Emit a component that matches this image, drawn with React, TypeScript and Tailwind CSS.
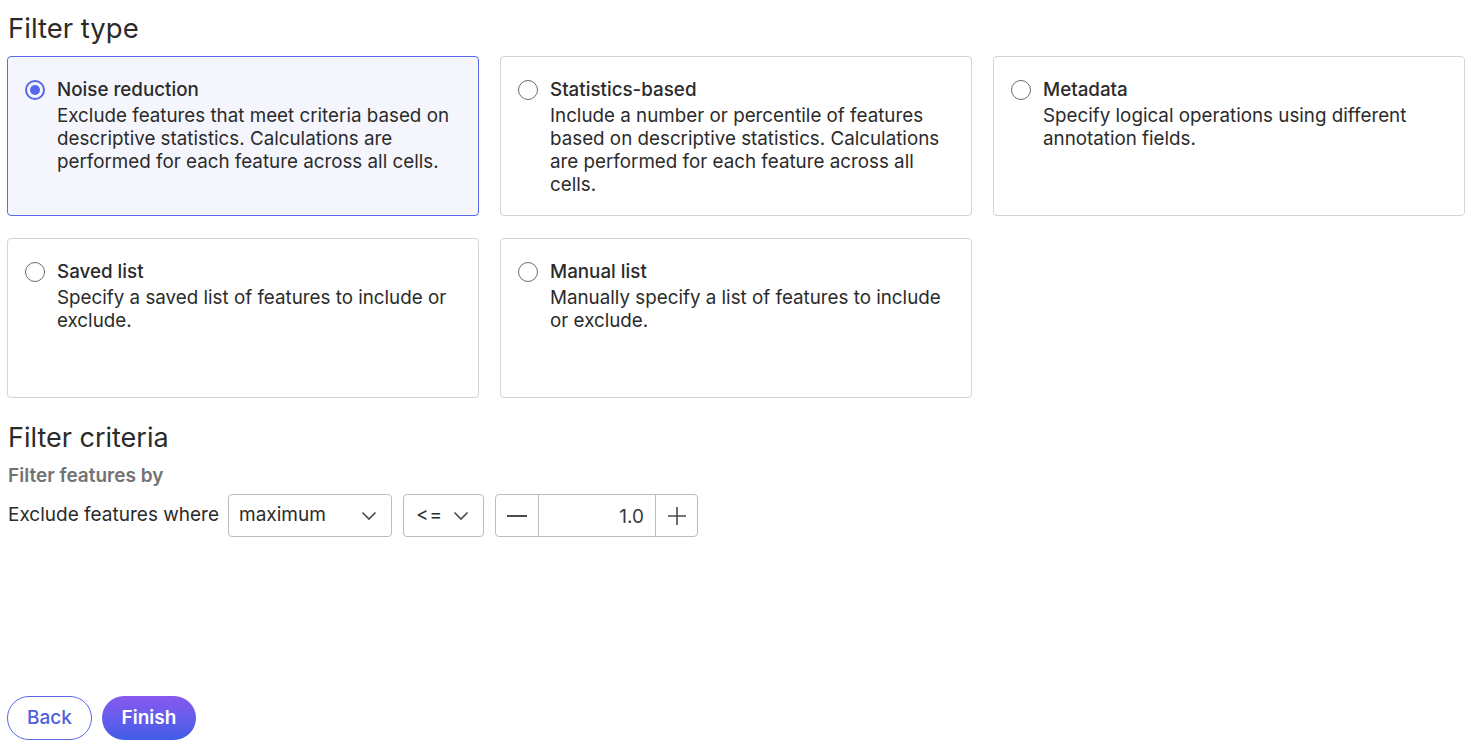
import { useState } from "react";

/* ------------------------------------------------------------------ */
/*  Data                                                               */
/* ------------------------------------------------------------------ */
interface FilterOption {
  id: string;
  title: string;
  description: string;
}

const OPTIONS: FilterOption[] = [
  {
    id: "noise",
    title: "Noise reduction",
    description:
      "Exclude features that meet criteria based on descriptive statistics. Calculations are performed for each feature across all cells.",
  },
  {
    id: "stats",
    title: "Statistics-based",
    description:
      "Include a number or percentile of features based on descriptive statistics. Calculations are performed for each feature across all cells.",
  },
  {
    id: "metadata",
    title: "Metadata",
    description: "Specify logical operations using different annotation fields.",
  },
  {
    id: "saved",
    title: "Saved list",
    description: "Specify a saved list of features to include or exclude.",
  },
  {
    id: "manual",
    title: "Manual list",
    description: "Manually specify a list of features to include or exclude.",
  },
];

const Chevron = () => (
  <svg width="20" height="20" viewBox="0 0 20 20" fill="none" stroke="#4a4a4a" strokeWidth="1.6">
    <path d="M3.5 6.5 10 13l6.5-6.5" />
  </svg>
);

/* ------------------------------------------------------------------ */
/*  Component                                                          */
/* ------------------------------------------------------------------ */
export default function App() {
  const [selected, setSelected] = useState("noise");
  const [value, setValue] = useState(1.0);

  return (
    <div
      className="min-h-[746px] bg-white pl-[7px] pr-[8px] pt-[11px] text-[#2b2b2b] flex flex-col"
      style={{ fontFamily: "Inter, 'Noto Sans', sans-serif" }}
    >
      <h1 className="pl-px text-[27.5px] leading-[34px] font-normal text-[#2b2b2b]">Filter type</h1>

      {/* -------- Options grid -------- */}
      <div className="mt-[11px] grid grid-cols-3 gap-x-[21px] gap-y-[22px]">
        {OPTIONS.map((opt) => {
          const active = opt.id === selected;
          return (
            <button
              key={opt.id}
              onClick={() => setSelected(opt.id)}
              className={`h-[160px] rounded border text-left flex gap-[12px] px-[17px] pt-[21px] ${
                active ? "border-[#5b6ae6] bg-[#f5f6fd]" : "border-[#d4d4d4] bg-white"
              }`}
            >
              <span
                className={`mt-[2px] w-[20px] h-[20px] shrink-0 rounded-full flex items-center justify-center border-2 ${
                  active ? "border-[#5766ea]" : "border-[#6b6b6b] border-[1.5px]"
                }`}
              >
                {active && <span className="w-[10px] h-[10px] rounded-full bg-[#5766ea]" />}
              </span>
              <span className="flex flex-col">
                <span className="text-[18.8px] leading-[24px] font-medium text-[#2b2b2b]">
                  {opt.title}
                </span>
                <span className="mt-[2px] text-[18.8px] leading-[23px] text-[#2b2b2b] pr-3">
                  {opt.description}
                </span>
              </span>
            </button>
          );
        })}
      </div>

      {/* -------- Filter criteria -------- */}
      <h2 className="pl-px mt-[23px] text-[27px] leading-[34px] font-normal">Filter criteria</h2>
      <div className="pl-px mt-[9px] text-[19px] leading-[24px] font-semibold text-[#737373]">
        Filter features by
      </div>

      <div className="pl-px mt-[6px] flex items-center text-[19px]">
        <span className="mr-[9px]">Exclude features where</span>

        <div className="w-[164px] h-[43px] rounded border border-[#bdbdbd] flex items-center justify-between pl-[10px] pr-[12px]">
          <span>maximum</span>
          <Chevron />
        </div>

        <div className="ml-[11px] w-[81px] h-[43px] rounded border border-[#bdbdbd] flex items-center justify-between pl-[12px] pr-[12px]">
          <span className="tracking-[1px]">&lt;=</span>
          <Chevron />
        </div>

        <div className="ml-[11px] w-[203px] h-[43px] rounded border border-[#bdbdbd] flex">
          <button
            onClick={() => setValue((v) => v - 1)}
            className="w-[43px] flex items-center justify-center border-r border-[#bdbdbd]"
          >
            <svg width="22" height="22" viewBox="0 0 22 22" stroke="#4a4a4a" strokeWidth="2">
              <path d="M1 11h20" />
            </svg>
          </button>
          <div className="flex-1 flex items-center justify-end pr-[11px] pt-[4px] text-[#3a3a3a]">
            {value.toFixed(1)}
          </div>
          <button
            onClick={() => setValue((v) => v + 1)}
            className="w-[42px] flex items-center justify-center border-l border-[#bdbdbd]"
          >
            <svg width="22" height="22" viewBox="0 0 22 22" stroke="#4a4a4a" strokeWidth="1.6">
              <path d="M2 11h18M11 2v18" />
            </svg>
          </button>
        </div>
      </div>

      {/* -------- Footer buttons -------- */}
      <div className="mt-auto mb-[6px] flex gap-[10px]">
        <button className="h-[44px] w-[85px] rounded-full border border-[#5b6ae6] text-[#4f5fe0] text-[19px] font-medium">
          Back
        </button>
        <button className="h-[44px] w-[94px] rounded-full bg-gradient-to-b from-[#8759f0] to-[#3d5de6] text-white text-[19px] font-semibold">
          Finish
        </button>
      </div>
    </div>
  );
}
